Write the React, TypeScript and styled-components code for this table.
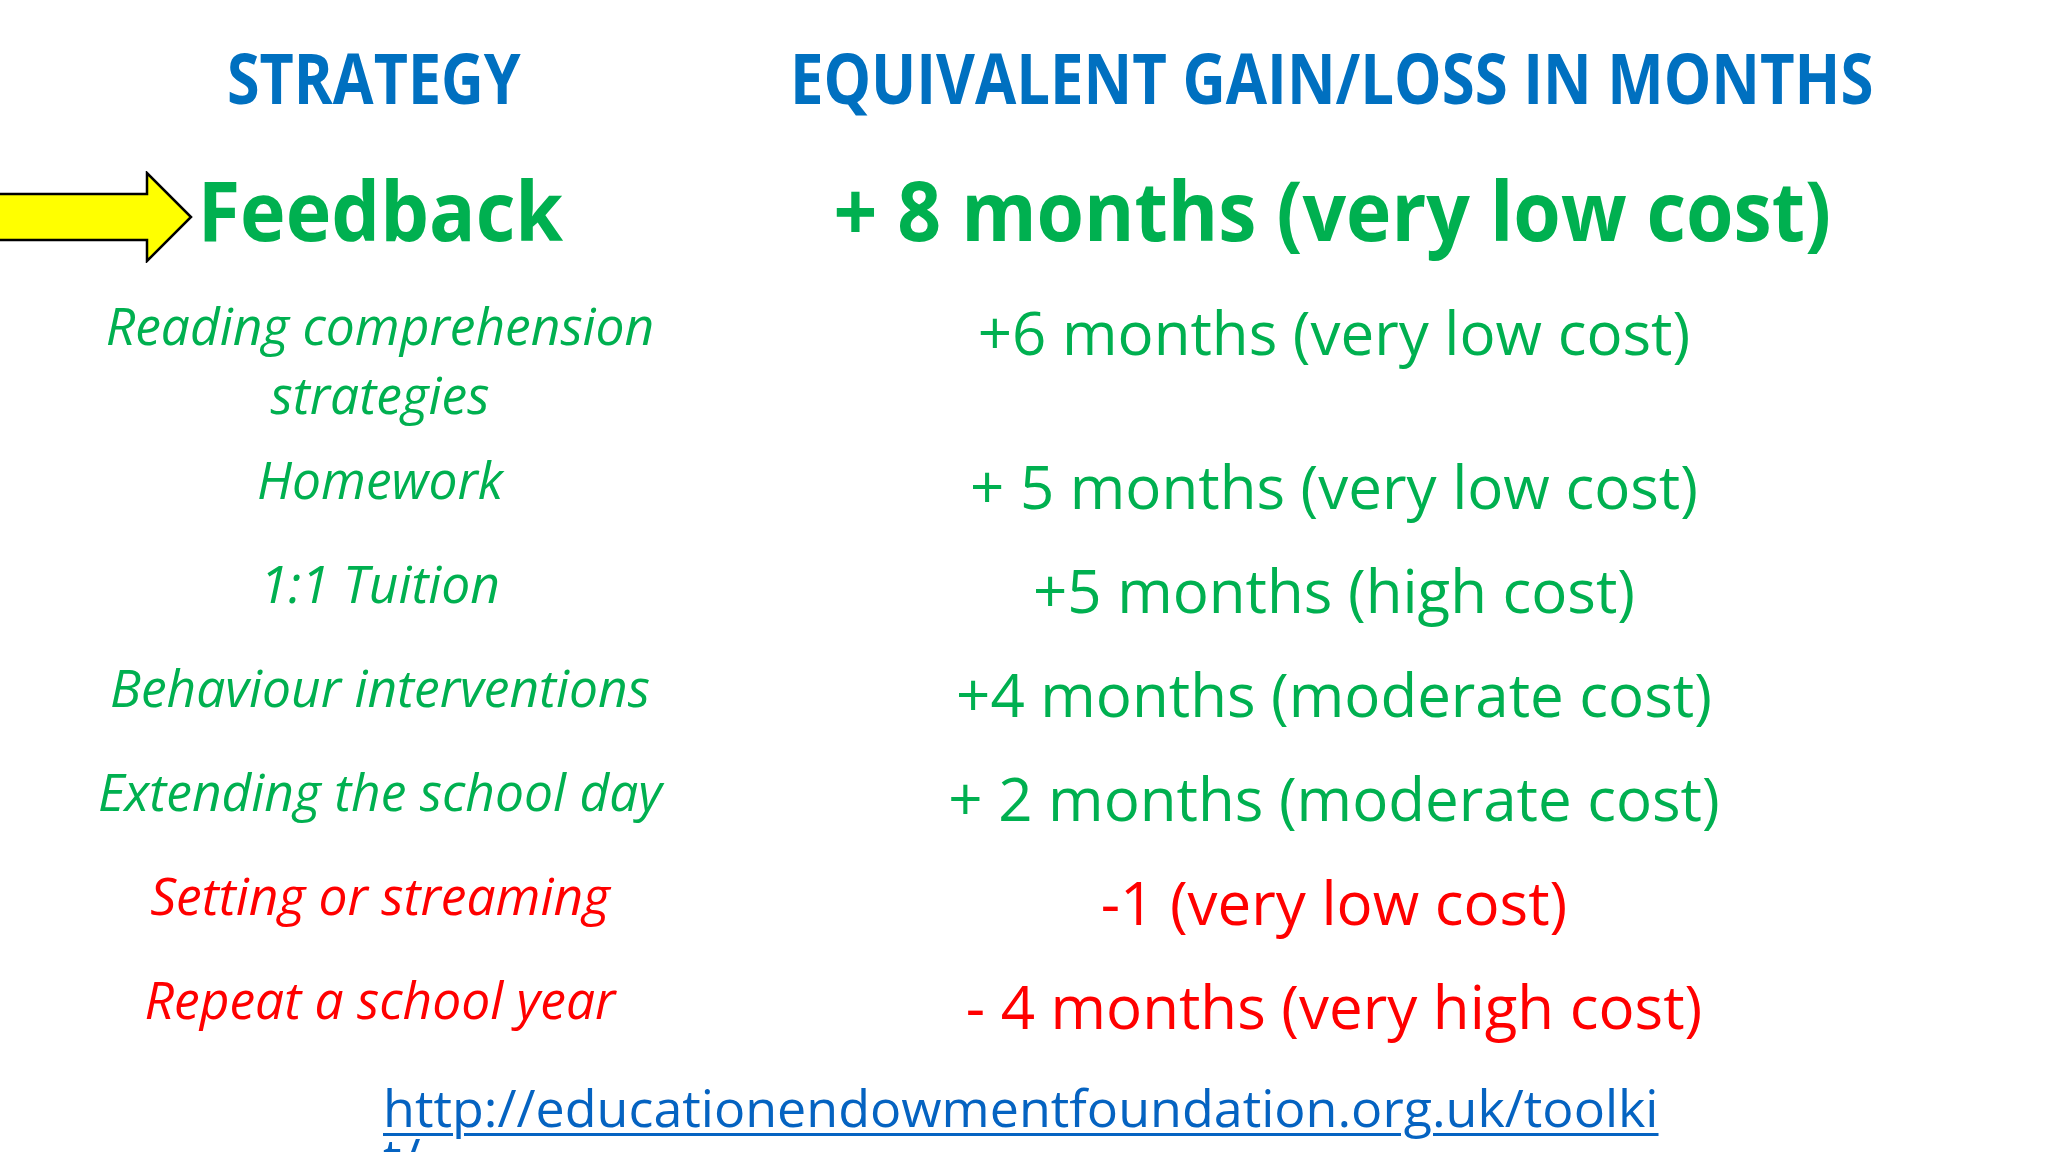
import React from "react";
import styled, { createGlobalStyle } from "styled-components";

const GlobalStyle = createGlobalStyle`
  html, body {
    margin: 0;
    padding: 0;
    background: #ffffff;
    overflow: hidden;
  }
`;

const GREEN = "#00b050";
const RED = "#ff0000";
const BLUE = "#0070c0";

const Slide = styled.div`
  width: 2048px;
  height: 1152px;
  box-sizing: border-box;
  padding-top: 27px;
  display: flex;
  flex-direction: column;
  font-family: "Open Sans", "Noto Sans", sans-serif;
  background: #ffffff;
  overflow: hidden;
`;

interface RowProps {
  height: number;
}

const Row = styled.div<RowProps>`
  display: grid;
  grid-template-columns: 760px 1144px;
  height: ${(p) => p.height}px;
  align-items: start;
  text-align: center;
`;

interface SqueezeProps {
  amount: number;
}

const Squeeze = styled.span<SqueezeProps>`
  display: inline-block;
  transform: scaleX(${(p) => p.amount});
  transform-origin: center;
`;

interface HeaderCellProps {
  shift?: number;
}

const HeaderCell = styled.div<HeaderCellProps>`
  display: flex;
  justify-content: center;
  padding-right: ${(p) => p.shift ?? 0}px;
  font-weight: 700;
  font-size: 70px;
  line-height: 100px;
  color: ${BLUE};
  white-space: nowrap;
`;

const FeatureCell = styled.div`
  display: flex;
  justify-content: center;
  font-weight: 700;
  font-size: 83px;
  line-height: 164px;
  color: ${GREEN};
  white-space: nowrap;
`;

const FeatureLabel = styled.span`
  position: relative;
  display: inline-block;
`;

const Pointer = styled.svg`
  position: absolute;
  right: 100%;
  top: 50%;
  margin-top: -38px;
  margin-right: -11px;
  width: 200px;
  height: 92px;
`;

interface TextProps {
  tone: "good" | "bad";
  lh: number;
}

const Strategy = styled.div<TextProps>`
  font-style: italic;
  font-size: 51.5px;
  line-height: ${(p) => p.lh}px;
  color: ${(p) => (p.tone === "good" ? GREEN : RED)};
`;

const Gain = styled.div<TextProps>`
  font-size: 60px;
  line-height: ${(p) => p.lh}px;
  padding-top: 7px;
  padding-left: 4px;
  color: ${(p) => (p.tone === "good" ? GREEN : RED)};
  white-space: nowrap;
`;

const LinkRow = styled.div`
  padding-top: 32px;
  padding-left: 383px;
`;

const Link = styled.a`
  font-size: 52px;
  line-height: 48px;
  color: #0563c1;
  text-decoration: underline;
  text-decoration-thickness: 3px;
  text-underline-offset: 6px;
`;

const rows = [
  { left: "Homework", right: "+ 5 months (very low cost)", tone: "good" },
  { left: "1:1 Tuition", right: "+5 months (high cost)", tone: "good" },
  { left: "Behaviour interventions", right: "+4 months (moderate cost)", tone: "good" },
  { left: "Extending the school day", right: "+ 2 months (moderate cost)", tone: "good" },
  { left: "Setting or streaming", right: "-1 (very low cost)", tone: "bad" },
  { left: "Repeat a school year", right: "- 4 months (very high cost)", tone: "bad" },
] as const;

function App(): JSX.Element {
  return (
    <>
      <GlobalStyle />
      <Slide>
        <Row height={100}>
          <HeaderCell shift={12}>
            <Squeeze amount={0.845}>STRATEGY</Squeeze>
          </HeaderCell>
          <HeaderCell>
            <Squeeze amount={0.855}>EQUIVALENT GAIN/LOSS IN MONTHS</Squeeze>
          </HeaderCell>
        </Row>
        <Row height={164}>
          <FeatureCell>
            <FeatureLabel>
              <Pointer viewBox="0 0 200 92">
                <polygon
                  points="-4,23 152,23 152,2 196,46 152,90 152,69 -4,69"
                  fill="#ffff00"
                  stroke="#000000"
                  strokeWidth="2.5"
                />
              </Pointer>
              <Squeeze amount={0.93}>Feedback</Squeeze>
            </FeatureLabel>
          </FeatureCell>
          <FeatureCell>
            <Squeeze amount={0.925}>+ 8 months (very low cost)</Squeeze>
          </FeatureCell>
        </Row>
        <Row height={136}>
          <Strategy tone="good" lh={69}>
            Reading comprehension
            <br />
            strategies
          </Strategy>
          <Gain tone="good" lh={69}>
            +6 months (very low cost)
          </Gain>
        </Row>
        {rows.map(({ left, right, tone }) => (
          <Row key={left} height={104}>
            <Strategy tone={tone} lh={104}>
              {left}
            </Strategy>
            <Gain tone={tone} lh={104}>
              {right}
            </Gain>
          </Row>
        ))}
        <LinkRow>
          <Link href="http://educationendowmentfoundation.org.uk/toolkit/">
            http://educationendowmentfoundation.org.uk/toolki
            <br />
            t/
          </Link>
        </LinkRow>
      </Slide>
    </>
  );
}

export default App;
